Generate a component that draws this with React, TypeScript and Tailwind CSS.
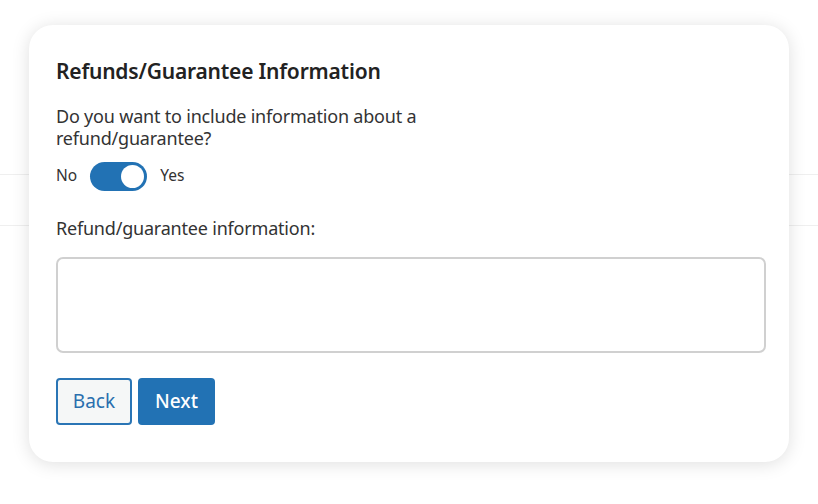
import React, { useState } from 'react';

export default function App() {
  const [enabled, setEnabled] = useState(true);
  const [info, setInfo] = useState('');

  return (
    <div
      className="relative w-[818px] h-[504px] bg-white overflow-hidden pt-[25px] pl-[29px]"
      style={{ fontFamily: '"Noto Sans", "Open Sans", sans-serif' }}
    >
      {/* faint rules behind the card */}
      <div className="absolute left-0 right-0 top-[174px] h-px bg-[#efefef]" />
      <div className="absolute left-0 right-0 top-[225px] h-px bg-[#efefef]" />

      <div className="relative w-[760px] h-[437px] bg-white rounded-[24px] shadow-[0_2px_18px_rgba(0,0,0,0.13)] pt-[30px] px-[27px]">
        <h2 className="text-[21px] leading-[32px] font-semibold text-[#222] tracking-[-0.2px]">
          Refunds/Guarantee Information
        </h2>

        <p className="mt-[18px] text-[18px] leading-[22px] text-[#333] tracking-[-0.2px]">
          Do you want to include information about a
          <br />
          refund/guarantee?
        </p>

        <div className="mt-[12px] flex items-center h-[30px] text-[15.5px] text-[#333]">
          <span>No</span>
          <button
            type="button"
            onClick={() => setEnabled(!enabled)}
            className={`ml-[13px] w-[57px] h-[29px] rounded-full flex items-center px-[3px] ${
              enabled ? 'bg-[#2272b4] justify-end' : 'bg-[#c4c4c4] justify-start'
            }`}
          >
            <span className="block w-[23px] h-[23px] rounded-full bg-white" />
          </button>
          <span className="ml-[13px]">Yes</span>
        </div>

        <label className="block mt-[26px] text-[18px] leading-[22px] text-[#333] tracking-[-0.2px]">
          Refund/guarantee information:
        </label>

        <textarea
          value={info}
          onChange={(e) => setInfo(e.target.value)}
          className="block mt-[18px] w-[710px] h-[96px] border-2 border-[#d0d0d0] rounded-[7px] resize-none outline-none p-2"
        />

        <div className="mt-[25px] flex gap-[6px]">
          <button
            type="button"
            className="w-[76px] h-[47px] rounded-[4px] border-2 border-[#2a75b5] bg-[#f5f7f7] text-[#2a6fae] text-[19px]"
          >
            Back
          </button>
          <button
            type="button"
            className="w-[77px] h-[47px] rounded-[4px] bg-[#2272b4] text-white text-[19px] font-medium"
          >
            Next
          </button>
        </div>
      </div>
    </div>
  );
}
